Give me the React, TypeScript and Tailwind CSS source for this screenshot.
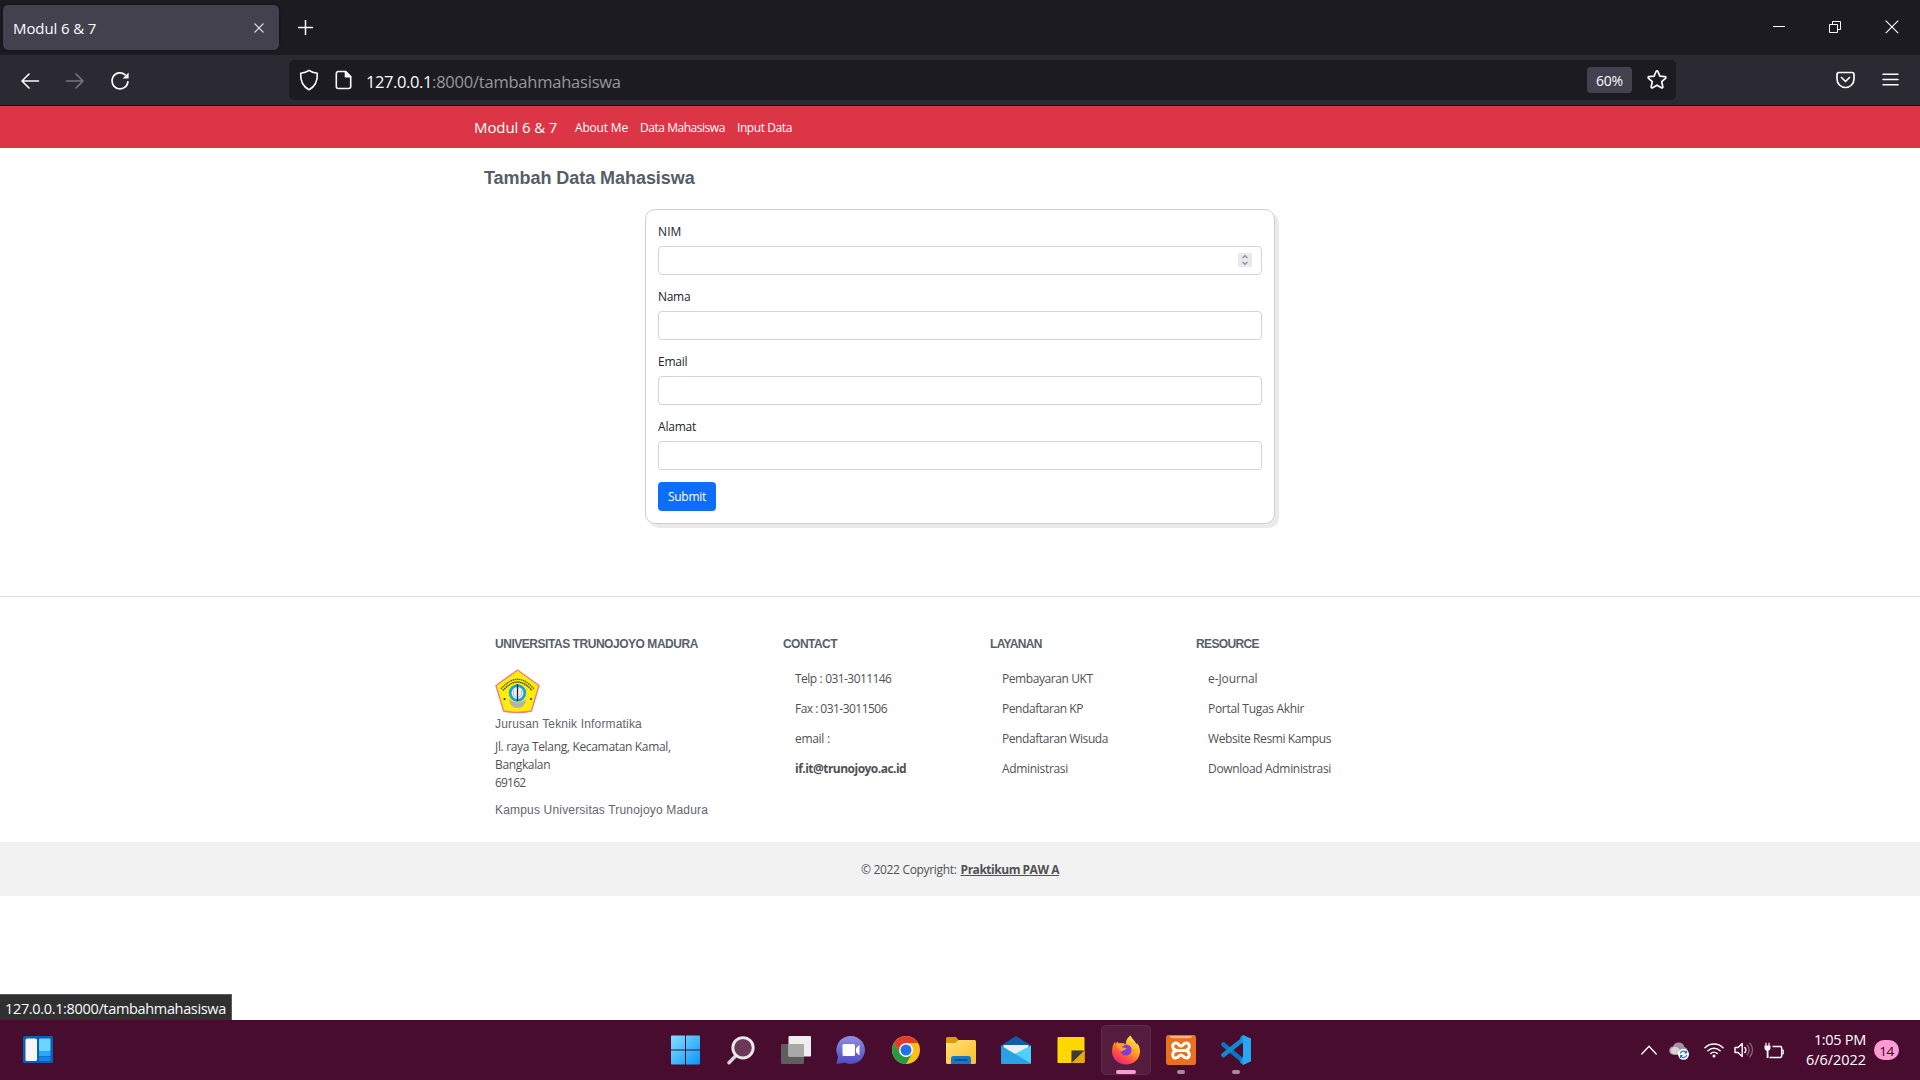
import React from "react";

const seg = "font-['Open_Sans','Noto_Sans',sans-serif]";
const arial = "font-['Liberation_Sans',Arial,sans-serif]";

function T({ c = "", children }: { c?: string; children: React.ReactNode }) {
  return <span className={`inline-block whitespace-nowrap ${c}`}>{children}</span>;
}

function TabStrip() {
  return (
    <div className="flex h-[55px] items-start bg-[#1c1b22] text-[#fbfbfe]">
      <div className="mt-[5px] ml-[3px] flex h-[45px] w-[276px] items-center justify-between rounded-[5px] bg-[#42414d] pr-[15px] pl-[10px] shadow-[0_0_3px_rgba(0,0,0,0.6)]">
        <T c="text-[15px] leading-[20px] tracking-[-0.1px]">Modul 6 &amp; 7</T>
        <svg width="10" height="10" viewBox="0 0 10 10" stroke="#d8d8de" strokeWidth="1.1"><path d="M.5.5l9 9M9.500.5l-9 9" /></svg>
      </div>
      <svg className="mt-[20px] ml-[19px]" width="15" height="15" viewBox="0 0 15 15" stroke="#fbfbfe" strokeWidth="1.5"><path d="M7.500 0v15M0 7.500h15" /></svg>
      <div className="mt-[20px] mr-[21px] ml-auto flex gap-[44px]">
        <svg className="mr-[-1px]" width="13" height="14" viewBox="0 0 13 14" stroke="#fff"><path d="M0 6.500h12" /></svg>
        <svg className="mr-[-1px]" width="13" height="14" viewBox="0 0 13 14" stroke="#fff" fill="none"><path d="M.5 4.500h8v8h-8zM3.500 4.500v-3h8v8h-3" /></svg>
        <svg width="14" height="14" viewBox="0 0 14 14" stroke="#fff" strokeWidth="1.1"><path d="M.7 .7l12.500 12.500M13.200.7L.7 13.200" /></svg>
      </div>
    </div>
  );
}

function Toolbar() {
  return (
    <div className="flex h-[51px] items-start border-b border-[#0c0c10] bg-[#2b2a33] text-[#fbfbfe]">
      <div className="mt-[16px] ml-[20px] flex w-[269px] gap-[25px]">
        <svg width="20" height="20" viewBox="0 0 20 20" fill="none" stroke="#fbfbfe" strokeWidth="1.6" strokeLinecap="round" strokeLinejoin="round"><path d="M18.500 10H2M9 3l-7 7 7 7" /></svg>
        <svg width="20" height="20" viewBox="0 0 20 20" fill="none" stroke="#77767f" strokeWidth="1.600" strokeLinecap="round" strokeLinejoin="round"><path d="M1.500 10H18M11 3l7 7-7 7" /></svg>
        <svg width="20" height="20" viewBox="0 0 20 20" fill="none" stroke="#fbfbfe" strokeWidth="1.700" strokeLinecap="round"><path d="M17.900 10.800A8 8 0 1 1 15.200 3.800" /><path d="M18.600 1.600v6h-6z" fill="#fbfbfe" stroke="none" /></svg>
      </div>
      <div className="mt-[5px] flex h-[40px] w-[1387px] items-center rounded-[5px] bg-[#1c1b22]">
        <svg className="ml-[10px]" width="20" height="22" viewBox="0 0 20 22" fill="none" stroke="#fbfbfe" strokeWidth="1.600" strokeLinejoin="round"><path d="M10 1.300C12.500 3.200 15.500 4 18.300 4.300 18.600 11 16.500 17.500 10 20.700 3.500 17.500 1.400 11 1.700 4.300 4.500 4 7.500 3.200 10 1.300z" /></svg>
        <svg className="ml-[16px]" width="18" height="20" viewBox="0 0 18 20" fill="none" stroke="#fbfbfe" strokeWidth="1.600" strokeLinejoin="round"><path d="M3.300 1.500h7.200L15.700 6.700v9.800a2 2 0 0 1-2 2H3.300a2 2 0 0 1-2-2v-13a2 2 0 0 1 2-2z" /><path d="M10.500 1.500v5.200h5.200z" fill="#fbfbfe" /></svg>
        <div className="ml-[13px] pt-[3px] text-[16.500px] leading-[24px]"><T c="tracking-[-0.4px]">127.0.0.1</T><T c="tracking-[-0.22px] text-[#98979d]">:8000/tambahmahasiswa</T></div>
        <div className="ml-auto flex h-[26px] w-[45px] items-center justify-center rounded-[4px] bg-[#42414d]"><T c="pt-px text-[14px] leading-[20px] tracking-[-0.2px]">60%</T></div>
        <svg className="mr-[8px] ml-[14px]" width="22" height="22" viewBox="0 0 22 22" fill="none" stroke="#fbfbfe" strokeWidth="1.700" strokeLinejoin="round"><path d="M11 1.800q.6 0 .9.700l2 4.600 5 .5c1 .1 1.300 1 .6 1.700l-3.800 3.400 1.100 5c.2 1-.6 1.500-1.400 1L11 16.200l-4.400 2.500c-.8.5-1.600 0-1.400-1l1.100-5L2.500 9.300c-.7-.7-.4-1.600.6-1.700l5-.5 2-4.600q.3-.7.9-.700z" /></svg>
      </div>
      <div className="mt-[16px] mr-[21px] ml-auto flex gap-[27.500px]">
        <svg width="19" height="18" viewBox="0 0 19 18" fill="none" stroke="#fbfbfe" strokeWidth="1.700" strokeLinecap="round" strokeLinejoin="round"><path d="M3 1.500h13a2 2 0 0 1 2 2V8a8.500 8.500 0 0 1-17 0V3.500a2 2 0 0 1 2-2z" /><path d="M5.500 6.500l4 4 4-4" /></svg>
        <svg width="17" height="18" viewBox="0 0 17 18" stroke="#fbfbfe" strokeWidth="1.500" strokeLinecap="round"><path d="M1 3.200h15M1 8.500h15M1 13.800h15" /></svg>
      </div>
    </div>
  );
}

function Navbar() {
  return (
    <nav className="flex h-[42px] items-center bg-[#dc3545] pl-[474px] text-white">
      <T c="w-[101px] text-[15px] leading-[20px] tracking-[-0.1px]">Modul 6 &amp; 7</T>
      <div className="flex pt-[2px] text-[12px] leading-[18px]">
        <T c="w-[65px] tracking-[-0.18px]">About Me</T>
        <T c="w-[97px] tracking-[-0.46px]">Data Mahasiswa</T>
        <T c="tracking-[-0.42px]">Input Data</T>
      </div>
    </nav>
  );
}

function Field({ label, c, number }: { label: string; c: string; number?: boolean }) {
  return (
    <div className="mb-3">
      <label className="mb-[5px] block h-[19px] pt-px leading-[18px]"><T c={c}>{label}</T></label>
      <div className="flex h-[29px] items-start justify-end rounded-[4px] border border-[#ced4da] pt-[6px] pr-[9px]">
        {number && (
          <div className="flex h-[14px] w-[14px] items-center justify-center bg-[#e9e9ed]">
            <svg width="8" height="12" viewBox="0 0 8 12" fill="none" stroke="#8f8f9d" strokeWidth="1.400"><path d="M1.500 4L4 1.700 6.500 4M1.500 8L4 10.300 6.500 8" /></svg>
          </div>
        )}
      </div>
    </div>
  );
}

function FormCard() {
  return (
    <div className="mx-auto mt-[20px] h-[315px] w-[630px] rounded-[10px] border border-[#cfcfcf] bg-white p-3 text-[12px] text-[#212529] shadow-[4px_4px_0_#eaeaea]">
      <Field label="NIM" c="tracking-[0.1px]" number />
      <Field label="Nama" c="tracking-[-0.3px]" />
      <Field label="Email" c="tracking-[-0.25px]" />
      <Field label="Alamat" c="tracking-[-0.2px]" />
      <button className="flex h-[29px] w-[58px] items-center justify-center rounded-[4px] bg-[#0d6efd] text-white"><T c="tracking-[-0.25px]">Submit</T></button>
    </div>
  );
}

function Emblem() {
  return (
    <svg width="45" height="45" viewBox="0 0 45 45">
      <path d="M22.500 1L44 16.500 36.500 42Q22.500 45 8.500 42L1 16.500z" fill="#fdee0a" stroke="#ee7e86" strokeWidth="1.400" />
      <path d="M6 20Q22.500 .500 39 20" fill="none" stroke="#5a5520" strokeWidth="1.300" strokeDasharray="1.500 .6" />
      <path d="M8 21.500Q22.500 4.500 37 21.500" fill="none" stroke="#3d3a1c" strokeWidth="1.300" strokeDasharray="1.500 .5" />
      <path d="M14 30.500q8.500 6 17 0q-1 8.500-8.500 8.500t-8.500-8.500z" fill="#b3b3ae" />
      <circle cx="22.500" cy="24" r="7.300" fill="#e9eef0" stroke="#19a4e0" strokeWidth="2.800" />
      <path d="M22.500 15v17" stroke="#222" strokeWidth="1.300" />
      <path d="M18.500 21v5l2.500 2M26.500 21v5L24 28" stroke="#b0bec4" strokeWidth="1" fill="none" />
      <circle cx="9.500" cy="30" r="1" fill="#222" /><circle cx="36" cy="30" r="1" fill="#222" />
    </svg>
  );
}

function LinkColumn({ title, tc, width, items }: { title: string; tc: string; width: string; items: [string, string][] }) {
  return (
    <div className={width}>
      <h6 className={`h-[18px] text-[12px] leading-[18px] font-bold text-[#57606a] ${arial}`}><T c={tc}>{title}</T></h6>
      <ul className="mt-[11px] ml-[12px]">
        {items.map(([t, c]) => (
          <li key={t} className="h-[30px] leading-[30px]"><T c={c}>{t}</T></li>
        ))}
      </ul>
    </div>
  );
}

function Footer() {
  return (
    <footer className="mt-[72px] border-t border-[#dee2e6] text-[12px] text-[#4f5254]">
      <div className="flex h-[245px] pt-[38px] pl-[495px]">
        <div className="w-[288px]">
          <h6 className={`h-[18px] text-[12px] leading-[18px] font-bold text-[#57606a] ${arial}`}><T c="tracking-[-0.46px]">UNIVERSITAS TRUNOJOYO MADURA</T></h6>
          <div className="mt-[16px] h-[45px]"><Emblem /></div>
          <p className={`mt-[2px] h-[16px] text-[12px] leading-[16px] text-[#5f676f] ${arial}`}><T c="tracking-[0.17px]">Jurusan Teknik Informatika</T></p>
          <p className="mt-[6px] leading-[18px]"><T c="tracking-[-0.33px]">Jl. raya Telang, Kecamatan Kamal,</T><br /><T c="tracking-[-0.35px]">Bangkalan</T><br /><T c="tracking-[-0.8px]">69162</T></p>
          <p className={`mt-[10px] h-[16px] text-[12px] leading-[16px] text-[#5f676f] ${arial}`}><T c="tracking-[0.18px]">Kampus Universitas Trunojoyo Madura</T></p>
        </div>
        <LinkColumn title="CONTACT" tc="tracking-[-0.55px]" width="w-[207px]" items={[["Telp : 031-3011146", "tracking-[-0.58px] [word-spacing:0.6px]"], ["Fax : 031-3011506", "tracking-[-0.53px]"], ["email :", "tracking-[-0.3px]"], ["if.it@trunojoyo.ac.id", "tracking-[-0.52px] font-bold"]]} />
        <LinkColumn title="LAYANAN" tc="tracking-[-0.68px]" width="w-[206px]" items={[["Pembayaran UKT", "tracking-[-0.42px]"], ["Pendaftaran KP", "tracking-[-0.42px]"], ["Pendaftaran Wisuda", "tracking-[-0.42px]"], ["Administrasi", "tracking-[-0.32px]"]]} />
        <LinkColumn title="RESOURCE" tc="tracking-[-0.63px]" width="w-[200px]" items={[["e-Journal", "tracking-[-0.1px]"], ["Portal Tugas Akhir", "tracking-[-0.3px]"], ["Website Resmi Kampus", "tracking-[-0.38px]"], ["Download Administrasi", "tracking-[-0.32px]"]]} />
      </div>
      <div className="flex h-[54px] items-center justify-center gap-[4px] bg-[#f2f2f2] pt-[2px]">
        <T c="tracking-[-0.32px]">© 2022 Copyright:</T>
        <T c="tracking-[-0.48px] font-bold underline">Praktikum PAW A</T>
      </div>
    </footer>
  );
}

function Cell({ children, mark }: { children: React.ReactNode; mark?: "active" | "open" }) {
  return (
    <div className={`relative mx-[2.500px] flex h-[50px] w-[50px] items-center justify-center rounded-[5px] ${mark === "active" ? "border border-[#5f2c4b] bg-[#541d3d]" : ""}`}>
      {children}
      {mark === "active" && <i className="absolute bottom-0 h-[4px] w-[20px] rounded-full bg-[#ff9ad5]" />}
      {mark === "open" && <i className="absolute bottom-px h-[4px] w-[8px] rounded-full bg-[#a98a9d]" />}
    </div>
  );
}

function Taskbar() {
  return (
    <div className="flex h-[60px] items-center bg-[#480c2f] text-white">
      <svg className="ml-[23px] mb-px" width="30" height="27" viewBox="0 0 30 27">
        <rect width="30" height="27" rx="1.500" fill="#0a5fb4" />
        <rect x="2.500" y="2.500" width="11.500" height="22.500" rx="1.500" fill="#f6f6f6" />
        <rect x="16" y="2.500" width="11.500" height="12.500" rx="1" fill="#69d6ff" />
        <rect x="16" y="15" width="11.500" height="5" fill="#2aa7f5" />
        <rect x="16" y="20.500" width="11.500" height="4.500" rx="1" fill="#0f86ea" />
      </svg>
      <div className="ml-[605px] flex">
        <Cell>
          <svg width="30" height="30" viewBox="0 0 30 30"><defs><linearGradient id="win" x1="0" y1="0" x2="1" y2="1"><stop stopColor="#86e0ff" /><stop offset="1" stopColor="#0a94fa" /></linearGradient></defs><path d="M1 .5H14V14.500H0V1.500a1 1 0 0 1 1-1zM15 .5H28a1 1 0 0 1 1 1V14.500H15zM0 15.500H14V29.500H1a1 1 0 0 1-1-1zM15 15.500H29V28.500a1 1 0 0 1-1 1H15z" fill="url(#win)" /></svg>
        </Cell>
        <Cell>
          <svg width="30" height="30" viewBox="0 0 30 30"><path d="M10 20.500L3 27.700" stroke="#d6d6d6" strokeWidth="3.400" strokeLinecap="round" /><circle cx="17" cy="12.800" r="10.200" fill="#6b3858" stroke="#e9e7e8" strokeWidth="2.900" /></svg>
        </Cell>
        <Cell>
          <svg width="30" height="30" viewBox="0 0 30 30"><rect y="9" width="23" height="20" rx="1" fill="#5e5e5e" /><rect x="7.500" y="1" width="22.500" height="20.500" rx="1" fill="#eeeeee" /><path d="M7.500 9H23v12.500H7.500z" fill="#a9a9a9" /></svg>
        </Cell>
        <Cell>
          <svg width="30" height="30" viewBox="0 0 30 30"><defs><linearGradient id="chat" x1="0" y1="0" x2="0" y2="1"><stop stopColor="#8f8fe0" /><stop offset="1" stopColor="#4d4cc4" /></linearGradient></defs><path d="M15 1a14 14 0 1 1-6 26.700L.5 29 2 21.500A14 14 0 0 1 15 1z" fill="url(#chat)" /><rect x="6.500" y="9" width="12.500" height="12" rx="1.500" fill="#fff" /><path d="M20 13.300l3.500-3.500v10.800L20 17.200z" fill="#fff" /></svg>
        </Cell>
        <Cell>
          <svg width="30" height="30" viewBox="0 0 30 30"><circle cx="15" cy="15" r="14" fill="#fbc116" /><path d="M2.900 8A14 14 0 0 1 27.100 8H15L9 18.500z" fill="#e23b2e" /><path d="M2.900 8A14 14 0 0 0 15 29l6.100-10.500L9 18.500z" fill="#259a41" /><circle cx="15" cy="15" r="7" fill="#fff" /><circle cx="15" cy="15" r="5.500" fill="#1f72e8" /></svg>
        </Cell>
        <Cell>
          <svg width="30" height="30" viewBox="0 0 30 30"><defs><linearGradient id="fold" x1="0" y1="0" x2="1" y2="1"><stop stopColor="#ffe07a" /><stop offset="1" stopColor="#fcbf26" /></linearGradient></defs><path d="M0 3.500Q0 2 1.500 2H10l3 3.500V10H0z" fill="#dc9c08" /><path d="M0 8h9.500l3-3H28.500Q30 5 30 6.500V27.500Q30 29 28.500 29H1.500Q0 29 0 27.500z" fill="url(#fold)" /><path d="M5 29V23.500a2.500 2.500 0 0 1 2.500-2.500h15a2.500 2.500 0 0 1 2.500 2.500V29z" fill="#1479c9" /><path d="M8.500 25h13" stroke="#0a3f70" strokeWidth="1.300" /></svg>
        </Cell>
        <Cell>
          <svg width="30" height="30" viewBox="0 0 30 30"><path d="M0 10.500L15 1l15 9.500z" fill="#0e5cab" /><path d="M0 10h30v10H0z" fill="#0e5cab" /><path d="M2.500 10h25v3L17 20h-4L2.500 13z" fill="#ededed" /><path d="M30 10.500V28a1 1 0 0 1-1 1L13 19.300z" fill="#4fd0f8" /><path d="M0 10.500L30 28.500a1 1 0 0 1-1 .5H1a1 1 0 0 1-1-1z" fill="#2aa0e6" /></svg>
        </Cell>
        <Cell>
          <svg width="30" height="30" viewBox="0 0 30 30"><path d="M2.500 2H27.500a1 1 0 0 1 1 1V27a1 1 0 0 1-1 1H2.500a1 1 0 0 1-1-1V3a1 1 0 0 1 1-1z" fill="#ffd803" /><path d="M15.500 15.500H28.500V27a1 1 0 0 1-1 1H15.500z" fill="#eaa90a" /><path d="M15.500 28V15.500H28.300z" fill="#3b3b3b" /></svg>
        </Cell>
        <Cell mark="active">
          <svg width="30" height="30" viewBox="0 0 30 30"><defs><linearGradient id="fx" x1=".85" y1=".05" x2=".25" y2="1"><stop stopColor="#fff04a" /><stop offset=".4" stopColor="#ffa426" /><stop offset=".75" stopColor="#ff4a44" /><stop offset="1" stopColor="#e8208c" /></linearGradient></defs><path d="M19.500.5c1.500 3 2.500 3.500 4 5.500 1 1.300 1.500 2.200 1.800 3.500l.7-1.500c2 2.500 3 5.500 3 8.500A14 13 0 0 1 1 16.500C1 12.500 2 9 4 6.500L4.500 9 6.500 6.500 8 8.500c3-.5 5 0 7 .5-.3-4 2-6.500 4.500-8.500z" fill="url(#fx)" /><circle cx="15" cy="15" r="5.600" fill="#7a3ee0" /><path d="M5 9.500C8 7.500 12 8.500 14 9c0 1.500-2.500 2-3.500 3.500 2 0 4 .3 5 .8-1 2.300-3.500 1.500-4.500 3.200-2.500-.5-3.500-4-6-7z" fill="#ffa02a" /></svg>
        </Cell>
        <Cell mark="open">
          <svg width="30" height="30" viewBox="0 0 30 30"><rect width="30" height="30" rx="2.500" fill="#e9701f" /><path d="M3.500 1h23l-2 2.300h-19z" fill="#ffb27d" /><path d="M11.500 15.500h7M11.500 15.500c-6 0-6-7.500-2-7.500 4 0 3 3 5.500 3s1.500-3 5.500-3c4 0 4 7.500-2 7.500 6 0 6 7.500 2 7.500s-3-3-5.500-3-1.500 3-5.500 3-4-7.500 2-7.500z" fill="none" stroke="#fff" strokeWidth="3" strokeLinejoin="round" /></svg>
        </Cell>
        <Cell mark="open">
          <svg width="30" height="30" viewBox="0 0 30 30"><path d="M2.500 9.500L22 26" stroke="#0a76bf" strokeWidth="4.500" strokeLinecap="round" /><path d="M2.500 20L22 4.500" stroke="#1488d1" strokeWidth="4.500" strokeLinecap="round" /><path d="M22 0l8 3.500v23L22 30V0z" fill="#27a6f2" /><path d="M22 0l-3 2.500L22 9zM22 30l-3-2.500L22 21z" fill="#1b93dd" /></svg>
        </Cell>
      </div>
      <div className="mr-[21px] ml-auto flex items-center">
        <svg width="16" height="10" viewBox="0 0 16 10" fill="none" stroke="#fff" strokeWidth="1.300" strokeLinecap="round"><path d="M.8 9L8 1.200 15.200 9" /></svg>
        <svg className="mt-[2px] ml-[12px]" width="20" height="18" viewBox="0 0 20 18"><path d="M4.500 12.500a4 4 0 0 1-.5-8A6 6 0 0 1 15.500 5a4 4 0 0 1 1 7.500z" fill="#a891a2" /><path d="M3.500 5.500C6 4 9 5 10.500 7.500L14 12.500H4.500A3.800 3.800 0 0 1 3.500 5.500z" fill="#d9d0d6" /><circle cx="14.500" cy="12.300" r="5.500" fill="#fff" /><path d="M11.300 11.500a3.300 3.300 0 0 1 6-.8M17.700 13a3.300 3.300 0 0 1-6 1M17.500 8.800v2.200h-2.200M11.500 15.900v-2.200h2.200" fill="none" stroke="#1b75d0" strokeWidth="1.200" /></svg>
        <svg className="ml-[15px]" width="20" height="16" viewBox="0 0 20 16" fill="none" stroke="#fff" strokeWidth="1.500" strokeLinecap="round"><path d="M1 5.800a12.800 12.800 0 0 1 18 0M3.900 8.700a8.700 8.700 0 0 1 12.200 0M6.800 11.500a4.600 4.600 0 0 1 6.400 0" /><circle cx="10" cy="14" r="1.500" fill="#fff" stroke="none" /></svg>
        <svg className="ml-[10px]" width="20" height="16" viewBox="0 0 20 16" fill="none" stroke="#fff" strokeWidth="1.400" strokeLinecap="round" strokeLinejoin="round"><path d="M1 5.500h3L8.200 1.500v13L4 10.500H1zM10.800 5.500a3.500 3.500 0 0 1 0 5" /><path d="M13.200 3.200a7 7 0 0 1 0 9.600M15.800 1.200a10 10 0 0 1 0 13.600" stroke="#8a6279" /></svg>
        <svg className="ml-[10px]" width="20" height="17" viewBox="0 0 20 17" fill="none" stroke="#fff" strokeWidth="1.500" strokeLinejoin="round"><path d="M8.500 4.500H16.200a1.500 1.500 0 0 1 1.500 1.500v8a1.500 1.500 0 0 1-1.500 1.500H5.500" /><path d="M18.200 8.200h1v3.600h-1" strokeWidth="1.200" /><path d="M.5 3.500h6v2.800a2.500 2.500 0 0 1-2 2.400V16H2.700V8.700A2.500 2.500 0 0 1 .5 6.300z" fill="#fff" stroke="none" /><path d="M2 .8v3M5 .8v3" strokeWidth="1.200" /></svg>
        <div className="ml-[21px] w-[61px] text-right text-[14.500px] leading-[20px]"><T c="tracking-[-0.3px]">1:05 PM</T><br /><T c="tracking-[-0.05px]">6/6/2022</T></div>
        <div className="ml-[8px] flex h-[20px] w-[25px] items-center justify-center rounded-full bg-[#ff9ad5] pt-px text-[13.500px] leading-[18px] text-[#1f0a16]"><T c="tracking-[-0.5px]">14</T></div>
      </div>
    </div>
  );
}

export default function App() {
  return (
    <div className={`relative flex h-[1080px] w-[1920px] flex-col overflow-hidden bg-white ${seg}`}>
      <TabStrip />
      <Toolbar />
      <Navbar />
      <main className="flex-1">
        <h5 className={`mt-[19px] ml-[484px] h-[22px] text-[18px] leading-[22px] font-bold text-[#555e68] ${arial}`}><T c="tracking-[-0.05px]">Tambah Data Mahasiswa</T></h5>
        <FormCard />
        <Footer />
      </main>
      <div className="absolute bottom-[60px] left-0 flex h-[26px] w-[232px] items-center border-t border-r border-[#5b5b5b] bg-[#303030] pt-[2px] pl-[5px] text-[14.500px] leading-[20px] text-[#fbfbfe]"><T c="tracking-[-0.34px]">127.0.0.1:8000/tambahmahasiswa</T></div>
      <Taskbar />
    </div>
  );
}
